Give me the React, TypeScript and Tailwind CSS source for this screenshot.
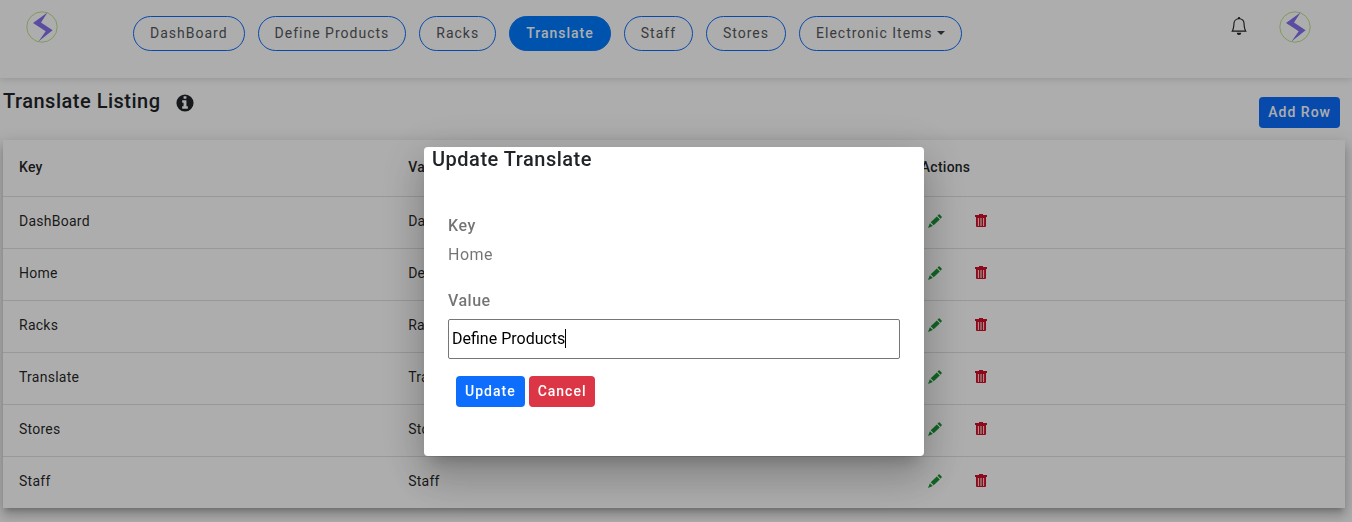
import { useState } from "react";
import { BsBell } from "react-icons/bs";

const navItems = ["DashBoard", "Define Products", "Racks", "Translate", "Staff", "Stores"];

const rows = [
  { key: "DashBoard", value: "DashBoard" },
  { key: "Home", value: "Define Products" },
  { key: "Racks", value: "Racks" },
  { key: "Translate", value: "Translate" },
  { key: "Stores", value: "Stores" },
  { key: "Staff", value: "Staff" },
];

function Logo() {
  return (
    <svg className="size-8 shrink-0" viewBox="0 0 32 32" aria-hidden="true">
      <circle cx="16" cy="16" r="15.2" fill="none" stroke="#b5e07c" strokeWidth="0.9" />
      <path d="M21.500 1.500 L7 12 L19.700 20.300 L12.500 30.500 L26.600 19.300 L15 11.500 Z" fill="#8272ee" />
    </svg>
  );
}

function Info() {
  return (
    <svg className="mt-1 size-5" viewBox="0 0 1792 1792" fill="currentColor" aria-hidden="true">
      <path
        fillRule="evenodd"
        d="M1152 1376v-160q0-14-9-23t-23-9h-96v-512q0-14-9-23t-23-9h-320q-14 0-23 9t-9 23v160q0 14 9 23t23 9h96v320h-96q-14 0-23 9t-9 23v160q0 14 9 23t23 9h448q14 0 23-9t9-23zM1024 480v-160q0-14-9-23t-23-9h-192q-14 0-23 9t-9 23v160q0 14 9 23t23 9h192q14 0 23-9t9-23zM1664 896a768 768 0 1 1-1536 0a768 768 0 1 1 1536 0z"
      />
    </svg>
  );
}

function Pencil() {
  return (
    <svg className="size-3.5" viewBox="0 0 14 14" fill="#1a9436" aria-hidden="true">
      <path d="M10.600 0.600 a0.800 0.800 0 0 1 1.100 0 L13.600 2.500 a0.800 0.800 0 0 1 0 1.100 L12.500 4.700 L9.500 1.700 Z" />
      <path d="M8.800 2.400 L11.800 5.400 L5.700 11.300 L2.700 8.300 Z" />
      <path d="M1.900 9.200 L4.800 12.100 L0 14 Z" />
    </svg>
  );
}

function Trash() {
  return (
    <svg className="size-3.5" viewBox="0 0 14 14" fill="#d01028" aria-hidden="true">
      <path d="M5 0 h4 v1 h4 v2 h-12 v-2 h4 z" />
      <path
        fillRule="evenodd"
        d="M2 3 h10 v9 a1 1 0 0 1 -1 1 h-8 a1 1 0 0 1 -1 -1 z M3.900 4 v8 h0.900 v-8 z M6.500 4 v8 h1 v-8 z M9.200 4 v8 h0.900 v-8 z"
      />
    </svg>
  );
}

const pill = "flex h-[35px] items-center rounded-full border px-4 pb-px text-sm tracking-[1px]";
const headCell = "border-b border-black/12 px-4 pb-0.5 font-medium";
const cell = "border-b border-black/12 px-4 pb-1 group-last:border-b-0";

export default function App() {
  const [value, setValue] = useState("Define Products");

  return (
    <div className="min-h-screen bg-white font-['Roboto',sans-serif] text-[#212529]">
      <header className="flex h-[78px] items-start pr-[41px] pl-[26px] shadow-[0_2px_6px_rgba(0,0,0,0.12)]">
        <a href="#home" aria-label="Home" className="mt-[11px]">
          <Logo />
        </a>
        <nav className="mt-4 ml-[75px] flex gap-[13px]">
          {navItems.map((item) => (
            <a
              key={item}
              href={`#${item}`}
              className={
                item === "Translate"
                  ? `${pill} border-[#007bff] bg-[#007bff] font-medium text-white`
                  : `${pill} border-[#0d6efd] text-[#55585c]`
              }
            >
              {item}
            </a>
          ))}
          <button type="button" className={`${pill} gap-1 border-[#0d6efd] text-[#55585c]`}>
            Electronic Items
            <svg className="h-1 w-2" viewBox="0 0 8 4" fill="#3d4247" aria-hidden="true">
              <path d="M0 0 H8 L4 4 Z" />
            </svg>
          </button>
        </nav>
        <button type="button" aria-label="Notifications" className="mt-[17px] ml-auto">
          <BsBell className="size-[18px]" />
        </button>
        <a href="#profile" aria-label="Profile" className="mt-[11px] ml-[31px]">
          <Logo />
        </a>
      </header>

      <main className="pr-[7px] pb-3.5 pl-[3px]">
        <div className="flex h-[62px] items-start justify-between pr-[5px]">
          <div className="mt-2 flex items-center gap-3.5">
            <h1 className="text-xl leading-[30px] font-medium tracking-[0.5px]">Translate Listing</h1>
            <Info />
          </div>
          <button
            type="button"
            className="mt-[19px] h-[31px] rounded bg-[#0d6efd] px-[9px] pb-px text-sm font-medium tracking-[1px] text-white"
          >
            Add Row
          </button>
        </div>

        <table className="w-full table-fixed border-separate border-spacing-0 bg-white text-left text-sm tracking-[0.25px] text-black/87 shadow-[0_5px_5px_-3px_rgba(0,0,0,0.2),0_8px_10px_1px_rgba(0,0,0,0.14),0_3px_14px_2px_rgba(0,0,0,0.12)]">
          <thead>
            <tr className="h-[57px]">
              <th className={`w-[29%] ${headCell}`}>Key</th>
              <th className={`w-[38.2%] ${headCell}`}>Value</th>
              <th className={headCell}>Actions</th>
            </tr>
          </thead>
          <tbody>
            {rows.map((row) => (
              <tr key={row.key} className="group h-[52px] last:h-[51px]">
                <td className={cell}>{row.key}</td>
                <td className={cell}>{row.value}</td>
                <td className={cell}>
                  <div className="flex gap-8 pl-[7px]">
                    <button type="button" aria-label={`Edit ${row.key}`}>
                      <Pencil />
                    </button>
                    <button type="button" aria-label={`Delete ${row.key}`}>
                      <Trash />
                    </button>
                  </div>
                </td>
              </tr>
            ))}
          </tbody>
        </table>
      </main>

      <div className="fixed inset-0 flex items-start justify-center bg-black/32 pt-[147px] pr-1">
        <div
          role="dialog"
          aria-modal="true"
          aria-labelledby="dialog-title"
          className="w-full max-w-[500px] rounded bg-white pb-[49px] shadow-[0_11px_15px_-7px_rgba(0,0,0,0.2),0_24px_38px_3px_rgba(0,0,0,0.14),0_9px_46px_8px_rgba(0,0,0,0.12)]"
        >
          <h2 id="dialog-title" className="px-2 text-xl leading-6 font-medium tracking-[0.5px]">
            Update Translate
          </h2>
          <form className="mt-10 px-6 text-base tracking-[0.5px] text-black/55" onSubmit={(e) => e.preventDefault()}>
            <p className="leading-[30px] font-medium">Key</p>
            <p className="leading-7">Home</p>
            <label htmlFor="value" className="mt-[17px] block leading-[30px] font-medium">
              Value
            </label>
            <div className="relative mt-[3px]">
              <input
                id="value"
                autoFocus
                value={value}
                onChange={(e) => setValue(e.target.value)}
                className="block h-10 w-full rounded-xs border border-[#767676] px-[3px] pb-0.5 tracking-normal text-black caret-transparent outline-none"
              />
              <span className="absolute top-2.5 left-[117px] h-[19px] w-px bg-black" />
            </div>
            <div className="mt-[17px] flex gap-1 px-2 text-sm font-medium tracking-[1px] text-white">
              <button type="submit" className="h-[31px] rounded bg-[#0d6efd] px-[9px] pb-px">
                Update
              </button>
              <button type="button" className="h-[31px] rounded bg-[#dc3545] px-[9px] pb-px">
                Cancel
              </button>
            </div>
          </form>
        </div>
      </div>
    </div>
  );
}
